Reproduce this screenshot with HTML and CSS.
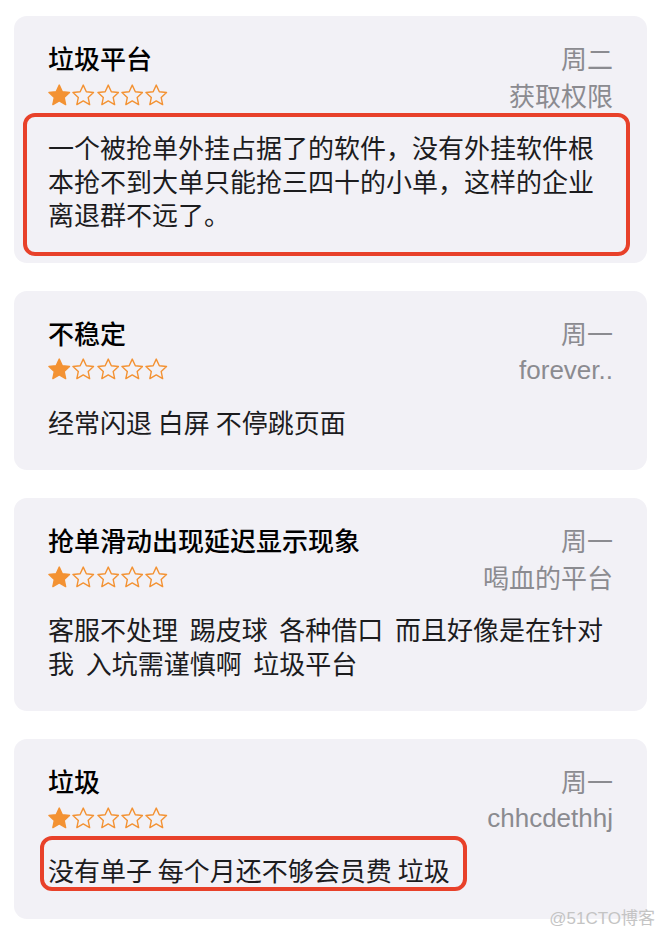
FILE: index.html
```html
<!DOCTYPE html>
<html lang="zh">
<head>
<meta charset="utf-8">
<link rel="stylesheet" href="styles.css">
</head>
<body>
<svg width="0" height="0" class="defs">
  <defs>
    <path id="star" d="M12 2.6l2.85 6.1 6.65.75-4.95 4.55 1.35 6.6L12 17.3l-5.9 3.3 1.35-6.6L2.5 9.45l6.65-.75z"/>
  </defs>
</svg>
<main class="list">
  <section class="card">
    <div class="head">
      <div class="title">垃圾平台</div>
      <div class="date">周二</div>
      <div class="stars">
        <svg class="star on" viewBox="1.6 1.6 20.8 20.8"><use href="#star"/></svg>
        <svg class="star" viewBox="1.6 1.6 20.8 20.8"><use href="#star"/></svg>
        <svg class="star" viewBox="1.6 1.6 20.8 20.8"><use href="#star"/></svg>
        <svg class="star" viewBox="1.6 1.6 20.8 20.8"><use href="#star"/></svg>
        <svg class="star" viewBox="1.6 1.6 20.8 20.8"><use href="#star"/></svg>
      </div>
      <div class="author">获取权限</div>
    </div>
    <p class="body marked mark-wide">一个被抢单外挂占据了的软件，没有外挂软件根本抢不到大单只能抢三四十的小单，这样的企业离退群不远了。</p>
  </section>

  <section class="card">
    <div class="head">
      <div class="title">不稳定</div>
      <div class="date">周一</div>
      <div class="stars">
        <svg class="star on" viewBox="1.6 1.6 20.8 20.8"><use href="#star"/></svg>
        <svg class="star" viewBox="1.6 1.6 20.8 20.8"><use href="#star"/></svg>
        <svg class="star" viewBox="1.6 1.6 20.8 20.8"><use href="#star"/></svg>
        <svg class="star" viewBox="1.6 1.6 20.8 20.8"><use href="#star"/></svg>
        <svg class="star" viewBox="1.6 1.6 20.8 20.8"><use href="#star"/></svg>
      </div>
      <div class="author latin">forever..</div>
    </div>
    <p class="body">经常闪退 白屏 不停跳页面</p>
  </section>

  <section class="card">
    <div class="head">
      <div class="title">抢单滑动出现延迟显示现象</div>
      <div class="date">周一</div>
      <div class="stars">
        <svg class="star on" viewBox="1.6 1.6 20.8 20.8"><use href="#star"/></svg>
        <svg class="star" viewBox="1.6 1.6 20.8 20.8"><use href="#star"/></svg>
        <svg class="star" viewBox="1.6 1.6 20.8 20.8"><use href="#star"/></svg>
        <svg class="star" viewBox="1.6 1.6 20.8 20.8"><use href="#star"/></svg>
        <svg class="star" viewBox="1.6 1.6 20.8 20.8"><use href="#star"/></svg>
      </div>
      <div class="author">喝血的平台</div>
    </div>
    <p class="body pre">客服不处理  踢皮球  各种借口  而且好像是在针对我  入坑需谨慎啊  垃圾平台</p>
  </section>

  <section class="card">
    <div class="head">
      <div class="title">垃圾</div>
      <div class="date">周一</div>
      <div class="stars">
        <svg class="star on" viewBox="1.6 1.6 20.8 20.8"><use href="#star"/></svg>
        <svg class="star" viewBox="1.6 1.6 20.8 20.8"><use href="#star"/></svg>
        <svg class="star" viewBox="1.6 1.6 20.8 20.8"><use href="#star"/></svg>
        <svg class="star" viewBox="1.6 1.6 20.8 20.8"><use href="#star"/></svg>
        <svg class="star" viewBox="1.6 1.6 20.8 20.8"><use href="#star"/></svg>
      </div>
      <div class="author latin">chhcdethhj</div>
    </div>
    <p class="body marked mark-tight">没有单子 每个月还不够会员费 垃圾</p>
  </section>
</main>
<div class="watermark">@51CTO博客</div>
</body>
</html>
```

FILE: styles.css
```css
html, body {
  margin: 0;
  padding: 0;
  background: #ffffff;
}

body {
  width: 662px;
  height: 936px;
  position: relative;
  overflow: hidden;
  font-family: "Inter", "Noto Sans CJK SC", sans-serif;
  -webkit-font-smoothing: antialiased;
}

.defs {
  position: absolute;
}

.list {
  display: flex;
  flex-direction: column;
  gap: 28px;
  padding: 16px 15px 0 14px;
}

.card {
  background: #f2f1f6;
  border-radius: 13px;
  padding: 24px 34px 32px 34px;
}

.head {
  display: grid;
  grid-template-columns: 1fr auto;
  grid-template-rows: 36px 38px;
  align-items: center;
}

.title {
  font-family: "Noto Sans CJK SC", sans-serif;
  font-size: 26px;
  font-weight: 500;
  line-height: 36px;
  color: #000000;
}

.date,
.author {
  font-family: "Noto Sans CJK SC", sans-serif;
  font-size: 26px;
  line-height: 36px;
  color: #8b8b90;
  text-align: right;
}

.author.latin {
  font-family: "Liberation Sans", "Noto Sans CJK SC", sans-serif;
  font-size: 26px;
}

.stars {
  display: flex;
  gap: 1.8px;
  align-items: center;
}

.star {
  width: 22.5px;
  height: 22.5px;
  display: block;
  fill: none;
  stroke: #f39233;
  stroke-width: 1.3;
  stroke-linejoin: round;
}

.star.on {
  fill: #f39233;
}

.body {
  margin: 16px 0 0 0;
  font-family: "Noto Sans CJK SC", sans-serif;
  font-size: 26px;
  line-height: 33.5px;
  color: #1c1c1e;
}

.pre {
  white-space: pre-wrap;
}

.marked {
  position: relative;
}

.marked::after {
  content: "";
  position: absolute;
  border: 4.5px solid #e8412a;
  border-radius: 12px;
  pointer-events: none;
}

.mark-wide::after {
  top: -17px;
  bottom: -25px;
  left: -25px;
  right: -17px;
}

.mark-tight {
  width: fit-content;
}

.mark-tight::after {
  top: -17px;
  bottom: -4px;
  left: -8px;
  right: -17px;
}

.watermark {
  position: absolute;
  right: 7px;
  bottom: 7px;
  font-family: "Liberation Sans", "Noto Sans CJK SC", sans-serif;
  font-size: 17px;
  color: #c4c4c4;
}
```
